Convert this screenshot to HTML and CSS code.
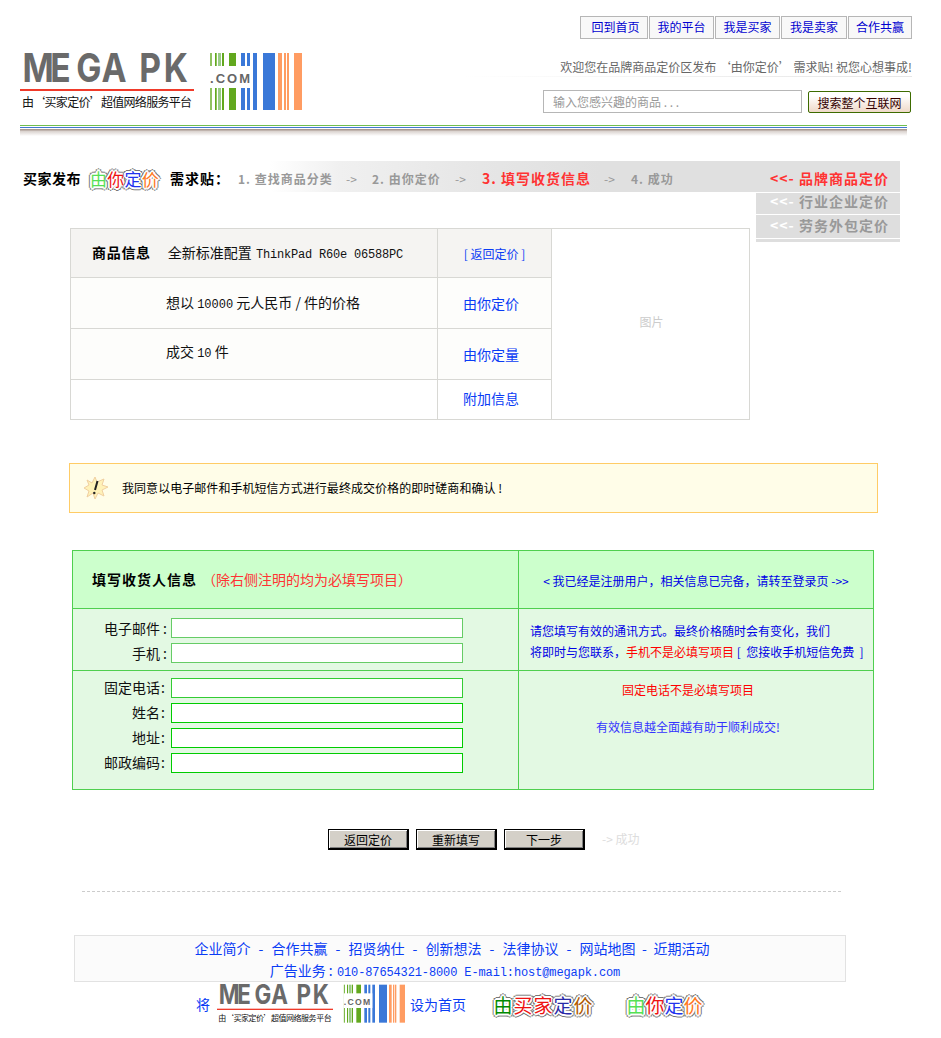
FILE: index.html
```html
<!DOCTYPE html>
<html lang="zh-CN">
<head>
<meta charset="utf-8">
<title>MEGA PK</title>
<link rel="stylesheet" href="styles.css">
</head>
<body>
<div class="page">
  <nav class="topnav">
    <a class="nav-first">回到首页</a><a class="nav-b">我的平台</a><a class="nav-b">我是买家</a><a class="nav-c">我是卖家</a><a class="nav-d">合作共赢</a>
  </nav>
  <header class="masthead">
    <svg class="logo" viewBox="0 0 282 60">
      <text class="logo-main" transform="scale(.84 1)" x="3 36 67 97 125 142 171" y="30">MEGA PK</text>
      <rect x="0" y="37" width="174" height="2" fill="#f03a2a"/>
      <text class="logo-sub" x="2" y="55" textLength="170">由‘买家定价’超值网络服务平台</text>
      <g class="bar-g"><rect x="190.3" y="1" width="1.4" height="57"/><rect x="195" y="1" width="1.7" height="57"/><rect x="198" y="1" width="3" height="57" fill="#9c8"/><rect x="202" y="1" width="2" height="57"/><rect x="209" y="1" width="7" height="57"/></g>
      <g class="bar-b"><rect x="221" y="1" width="4" height="57"/><rect x="227" y="1" width="3" height="57"/><rect x="233" y="1" width="4" height="57"/><rect x="243" y="1" width="12" height="57"/></g>
      <g class="bar-o"><rect x="258" y="1" width="4" height="57"/><rect x="264" y="1" width="2" height="57"/><rect x="267" y="1" width="2" height="57"/><rect x="274" y="1" width="8" height="57"/></g>
      <rect x="190" y="14" width="43" height="22" fill="#fff"/>
      <text class="logo-com" x="190" y="31" textLength="40">.COM</text>
    </svg>
    <div class="mast-right">
      <p class="welcome">欢迎您在品牌商品定价区发布 ‘由你定价’ 需求贴! 祝您心想事成!</p>
      <div class="searchrow">
        <input class="search-input" type="text" value="输入您感兴趣的商品 . . .">
        <button class="search-btn" type="button">搜索整个互联网</button>
      </div>
    </div>
  </header>
  <div class="rule"></div>

  <section class="stage">
    <div class="steps">
      <b class="lead">买家发布</b>
      <span class="sticker sticker-head"><i class="c-g">由</i><i class="c-r">你</i><i class="c-b">定</i><i class="c-o">价</i></span>
      <b class="lead lead-need">需求贴：</b>
      <b class="step s1">1. 查找商品分类</b><span class="arrow a1">-&gt;</span>
      <b class="step s2">2. 由你定价</b><span class="arrow a2">-&gt;</span>
      <b class="step-now">3. 填写收货信息</b><span class="arrow a3">-&gt;</span>
      <b class="step s4">4. 成功</b>
    </div>
    <div class="tab-active">&lt;&lt;- 品牌商品定价</div>
    <div class="stage-left">
      <table class="product">
        <tr class="row-head">
          <td class="p-main"><b class="p-title">商品信息</b><span class="p-name">全新标准配置 <span class="latin p-model">ThinkPad R60e 06588PC</span></span></td>
          <td class="p-link p-link-small"><a class="link-small">[ 返回定价 ]</a></td>
          <td class="p-pic" rowspan="4">图片</td>
        </tr>
        <tr class="row-a">
          <td class="p-text">想以 <span class="latin">10000</span> 元人民币 <span class="slash">/</span>件的价格</td>
          <td class="p-link"><a>由你定价</a></td>
        </tr>
        <tr class="row-b">
          <td class="p-text p-text-up">成交 <span class="latin">10</span> 件</td>
          <td class="p-link"><a>由你定量</a></td>
        </tr>
        <tr class="row-c">
          <td></td>
          <td class="p-link p-link-up"><a>附加信息</a></td>
        </tr>
      </table>
    </div>
    <div class="tabs">
      <div class="tab tab-1">&lt;&lt;- <span>行业企业定价</span></div>
      <div class="tab tab-2">&lt;&lt;- <span>劳务外包定价</span></div>
      <div class="tab-end"></div>
    </div>
  </section>

  <div class="notice">
    <svg class="notice-icon" viewBox="0 0 24 22">
      <polygon points="11,0 13,5 20,2 18,8 24,10 18,13 20,19 14,16 11,22 9,16 3,20 5,14 0,11 5,8 3,3 8,6" fill="#fff2b8" stroke="#f0cfa0" stroke-width="1"/>
      <path d="M13.5 4 L11 13" stroke="#222" stroke-width="2" fill="none"/>
      <circle cx="10.3" cy="16" r="1.2" fill="#222"/>
    </svg>
    <span class="notice-text">我同意以电子邮件和手机短信方式进行最终成交价格的即时磋商和确认 !</span>
  </div>

  <table class="form">
    <tr class="f-head">
      <td class="f-left"><b class="f-title">填写收货人信息</b><span class="f-req">（除右侧注明的均为必填写项目）</span></td>
      <td class="f-right center f-login"><a class="blue">&lt; 我已经是注册用户，相关信息已完备，请转至登录页 -&gt;&gt;</a></td>
    </tr>
    <tr class="f-row1">
      <td class="f-left">
        <div class="fields fields-1">
          <label class="field"><span>电子邮件<i class="colon">:</i></span><input class="inp inp-a" type="text"></label>
          <label class="field"><span>手机<i class="colon">:</i></span><input class="inp inp-a" type="text"></label>
        </div>
      </td>
      <td class="f-right f-hint">
        <span class="blue">请您填写有效的通讯方式。最终价格随时会有变化，我们</span><br>
        <span class="blue">将即时与您联系，</span><span class="red">手机不是必填写项目</span><span class="blue"> [&nbsp; 您接收手机短信免费 &nbsp;]</span>
      </td>
    </tr>
    <tr class="f-row2">
      <td class="f-left">
        <div class="fields fields-2">
          <label class="field"><span>固定电话<i class="colon">:</i></span><input class="inp inp-b" type="text"></label>
          <label class="field"><span>姓名<i class="colon">:</i></span><input class="inp inp-c" type="text"></label>
          <label class="field"><span>地址<i class="colon">:</i></span><input class="inp inp-c" type="text"></label>
          <label class="field"><span>邮政编码<i class="colon">:</i></span><input class="inp inp-c" type="text"></label>
        </div>
      </td>
      <td class="f-right f-note">
        <p class="red note-1">固定电话不是必填写项目</p>
        <p class="note-2">有效信息越全面越有助于顺利成交!</p>
      </td>
    </tr>
  </table>

  <div class="actions">
    <button class="act" type="button">返回定价</button>
    <button class="act" type="button">重新填写</button>
    <button class="act" type="button">下一步</button>
    <span class="act-next">-&gt; 成功</span>
  </div>

  <div class="dashed"></div>

  <footer class="foot">
    <p class="foot-links">企业简介<span class="sep">-</span>合作共赢<span class="sep">-</span>招贤纳仕<span class="sep">-</span>创新想法<span class="sep">-</span>法律协议<span class="sep">-</span>网站地图<span class="sep sep-last">-</span>近期活动</p>
    <p class="foot-ad">广告业务<i class="colon">:</i> <span class="latin foot-mail">010-87654321-8000 E-mail:host@megapk.com</span></p>
  </footer>
  <div class="foot-row">
    <a class="foot-a">将</a>
    <svg class="logo-small" viewBox="0 0 282 60">
      <text class="logo-main" transform="scale(.84 1)" x="3 36 67 97 125 142 171" y="30">MEGA PK</text>
      <rect x="0" y="37" width="174" height="2" fill="#f03a2a"/>
      <text class="logo-sub" x="2" y="55" textLength="170">由‘买家定价’超值网络服务平台</text>
      <g class="bar-g"><rect x="190.3" y="1" width="1.4" height="57"/><rect x="195" y="1" width="1.7" height="57"/><rect x="198" y="1" width="3" height="57" fill="#9c8"/><rect x="202" y="1" width="2" height="57"/><rect x="209" y="1" width="7" height="57"/></g>
      <g class="bar-b"><rect x="221" y="1" width="4" height="57"/><rect x="227" y="1" width="3" height="57"/><rect x="233" y="1" width="4" height="57"/><rect x="243" y="1" width="12" height="57"/></g>
      <g class="bar-o"><rect x="258" y="1" width="4" height="57"/><rect x="264" y="1" width="2" height="57"/><rect x="267" y="1" width="2" height="57"/><rect x="274" y="1" width="8" height="57"/></g>
      <rect x="190" y="14" width="43" height="22" fill="#fff"/>
      <text class="logo-com" x="190" y="31" textLength="40">.COM</text>
    </svg>
    <a class="foot-a foot-home">设为首页</a>
    <span class="sticker sticker-buyer"><i class="c-dg">由</i><i class="c-r">买</i><i class="c-r">家</i><i class="c-db">定</i><i class="c-br">价</i></span>
    <span class="sticker sticker-you"><i class="c-g">由</i><i class="c-r">你</i><i class="c-b">定</i><i class="c-o">价</i></span>
  </div>
</div>
</body>
</html>
```

FILE: styles.css
```css
* { box-sizing: border-box; }
html, body { margin: 0; padding: 0; background: #fff; }
body { font: 12px/1.2 "Noto Sans CJK SC", "Liberation Sans", sans-serif; color: #000; overflow-x: hidden; }
p { margin: 0; }
i { font-style: normal; }
.page { width: 941px; height: 1038px; overflow: hidden; }
.latin { font-family: "Liberation Mono", monospace; }
.blue { color: #0000e6; }
.red { color: #f00; }
.center { text-align: center; }
.colon { margin-left: 3px; margin-right: 1px; }

/* top nav */
.topnav { display: flex; justify-content: flex-end; gap: 1px; padding: 16px 29px 0 0; height: 39px; }
.topnav a { display: flex; align-items: center; justify-content: center; height: 23px; background: #f8f8f8; border: 1px solid #b6b6b6; color: #0000d0; }
.nav-first { width: 68px; padding-left: 3px; }
.nav-b { width: 65px; }
.nav-c { width: 66px; }
.nav-d { width: 64px; }

/* masthead */
.masthead { display: flex; justify-content: space-between; height: 86px; padding: 13px 29px 0 20px; }
.logo { width: 282px; height: 60px; display: block; overflow: visible; }
.logo-main { font: 700 40px Inter, "Liberation Sans", sans-serif; fill: #6a6a6a; }
.logo-sub { font: 12px "Noto Sans CJK SC", sans-serif; fill: #111; }
.logo-com { font: 700 13px "Liberation Sans", sans-serif; fill: #666; }
.bar-g { fill: #62a81e; }
.bar-b { fill: #3a78d8; }
.bar-o { fill: #ff9c62; }
.mast-right { width: 450px; display: flex; flex-direction: column; align-items: flex-end; padding-top: 7px; }
.welcome { width: 100%; height: 18px; line-height: 16px; text-align: right; color: #666; background: linear-gradient(90deg, #fff 0, #eee 60%, #e6e6e6 100%) left bottom / 100% 1px no-repeat; }
.searchrow { display: flex; align-items: flex-end; gap: 6px; margin-top: 13px; margin-right: 1px; }
.search-input { width: 259px; height: 23px; border: 1px solid #b6b6b6; padding: 0 9px; font: 12px "Noto Sans CJK SC", sans-serif; color: #999; background: #fff; outline: 0; }
.search-btn { width: 103px; height: 22px; padding: 0; border: 1px solid #3d6b00; border-radius: 2px; background: linear-gradient(180deg, #fff 20%, #efd9c8 100%); font: 12px "Noto Sans CJK SC", sans-serif; color: #300; }

.rule { margin-left: 20px; width: 887px; height: 11px; background: linear-gradient(180deg, #6fbf50 0 1px, #fff 1px 2px, #3f78d0 2px 3px, #fff 3px 4px, #a89890 4px 5px, #d8d0cc 6px, #fff 11px); }

/* steps + product */
.stage { display: grid; grid-template-columns: 756px 144px; margin-top: 25px; }
.steps { display: flex; align-items: center; height: 31px; padding: 4px 0 0 23px; background: linear-gradient(90deg, #fff 270px, #f0f0f0 340px, #e6e6e6 480px, #e0e0e0 600px); }
.tab-active { height: 31px; line-height: 34px; background: #e0e0e0; padding-left: 14px; color: #f33; font-weight: 700; font-size: 14px; letter-spacing: 1px; white-space: nowrap; }
.lead { font-size: 14px; letter-spacing: .5px; }
.lead-need { margin-left: 8px; width: 60px; letter-spacing: 1px; white-space: nowrap; }
.sticker { display: inline-flex; font-weight: 400; line-height: 1; text-shadow: 1px 0 #fff, -1px 0 #fff, 0 1px #fff, 0 -1px #fff, 1px 1px #fff, -1px -1px #fff, 1px -1px #fff, -1px 1px #fff, 2px 0 #fff, -2px 0 #fff, 0 2px #fff, 0 -2px #fff, 3px 0 #777, -3px 0 #777, 0 3px #777, 0 -3px #777, 2px 2px #777, -2px -2px #777, 2px -2px #777, -2px 2px #777; }
.sticker-head { font-size: 17px; width: 75px; margin-left: 6px; letter-spacing: .3px; justify-content: center; }
.c-g { color: #55e055; }
.c-r { color: #ee1111; }
.c-b { color: #2233ee; }
.c-o { color: #ff7722; }
.c-dg { color: #008a00; }
.c-db { color: #2a2aa8; }
.c-br { color: #b05a00; }
.step { color: #999; letter-spacing: 1px; margin-top: 2px; }
.s1 { margin-left: 8px; width: 94px; white-space: nowrap; }
.arrow { color: #999; width: 14px; margin-top: 2px; }
.a1 { margin-left: 14px; }
.s2 { margin-left: 12px; width: 69px; white-space: nowrap; }
.a2 { margin-left: 14px; }
.step-now { margin-left: 13px; width: 108px; color: #f33; font-size: 14px; white-space: nowrap; letter-spacing: 1px; }
.a3 { margin-left: 14px; }
.s4 { margin-left: 13px; white-space: nowrap; }
.stage-left { padding-left: 70px; padding-top: 36px; }
.tabs { display: flex; flex-direction: column; gap: 1px; padding-top: 1px; }
.tab { background: #dedede; padding-left: 14px; color: #fff; font-weight: 700; font-size: 14px; letter-spacing: 1px; white-space: nowrap; }
.tab-1 { height: 21px; line-height: 17px; }
.tab-2 { height: 23px; line-height: 20px; }
.tab span { color: #999; }
.tab-end { height: 3px; background: #dedede; }

.product { width: 680px; height: 192px; border-collapse: collapse; table-layout: fixed; }
.product td { border: 1px solid #d8d8d4; padding: 0; }
.product td:first-child { width: 367px; }
.product td.p-link { width: 114px; }
.row-head { height: 49px; background: #f5f4f2; }
.row-a { height: 51px; background: #fdfdfb; }
.row-b { height: 51px; background: #fdfdfb; }
.row-c { height: 40px; background: #fff; }
.product .p-main { padding-left: 21px; }
.p-title { font-size: 14px; margin-right: 17px; letter-spacing: .7px; }
.p-name { font-size: 14px; color: #111; }
.p-name .latin { font-size: 12px; }
.p-model { letter-spacing: -.2px; margin-left: 1px; }
.product .p-text { padding-left: 95px; font-size: 14px; color: #111; }
.p-text .latin { font-size: 12px; }
.product .p-text-up { padding-bottom: 4px; }
.slash { margin-right: 3px; }
.product .p-link { text-align: center; font-size: 14px; padding-right: 7px; }
.product .p-link-small { padding-right: 0; }
.product .p-link-up { padding-bottom: 2px; }
.p-link a { color: #0a3cf5; }
.p-link .link-small { font-size: 12px; }
.product .p-pic { background: #fff; color: #ccc; text-align: center; padding: 0 0 3px 2px; }

/* notice */
.notice { display: flex; align-items: center; margin: 43px 0 0 69px; width: 809px; height: 50px; background: #fffde8; border: 1px solid #ffcc66; padding-left: 14px; }
.notice-icon { width: 24px; height: 22px; margin-right: 14px; }
.notice-text { letter-spacing: .05px; }

/* form */
.form { margin: 37px 0 0 72px; width: 802px; height: 240px; border-collapse: collapse; table-layout: fixed; background: #e3f9e3; }
.form td { border: 1px solid #4fcf4f; padding: 0; }
.f-left { width: 446px; }
.f-head { height: 58px; background: #ccffcc; }
.form .f-head .f-left { padding-left: 19px; }
.f-title { font-size: 14px; letter-spacing: 1px; }
.f-req { font-size: 14px; color: #f33; margin-left: 5px; }
.form .f-login { padding-top: 3px; }
.f-row1 { height: 62px; }
.f-row2 { height: 119px; }
.form .f-hint { padding: 3px 0 0 11px; line-height: 21px; }
.f-note { vertical-align: top; text-align: center; }
.form .f-note { padding-right: 16px; }
.note-1 { margin-top: 12px; }
.note-2 { margin-top: 23px; color: #3333ff; }
.fields { display: flex; flex-direction: column; gap: 5px; }
.fields-1 { padding-top: 2px; }
.fields-2 { padding-bottom: 10px; }
.fields-2 .colon { margin-left: 1px; margin-right: 3px; }
.field { display: flex; align-items: center; gap: 3px; font-size: 14px; color: #111; }
.field span { width: 95px; text-align: right; }
.inp { width: 292px; height: 20px; padding: 0; background: #fff; outline: 0; border: 1px solid #00cc00; }
.inp-a { border-color: #66cc66; }
.inp-b { border-color: #33cc33; }
.inp-c { border-color: #00cc00; }

/* actions */
.actions { display: flex; align-items: center; gap: 7px; margin-top: 39px; padding-left: 328px; }
.act { width: 81px; height: 21px; padding: 0; background: #d4d0c8; border: 1px solid #000; border-right-width: 2px; border-bottom-width: 2px; box-shadow: inset 1px 1px #fff, inset -1px -1px #808080; font: 12px "Noto Sans CJK SC", sans-serif; color: #000; }
.act-next { margin-left: 10px; color: #ddd; }

.dashed { margin: 41px 0 0 82px; width: 759px; border-top: 1px dashed #ccc; }

/* footer */
.foot { margin: 43px 0 0 74px; width: 772px; height: 47px; background: #fbfbfb; border: 1px solid #e2e2e2; text-align: center; color: #0a3cf5; }
.foot-links { font-size: 14px; line-height: 24px; padding-right: 16px; }
.sep { display: inline-block; width: 21px; text-align: center; }
.sep-last { width: 18px; }
.foot-ad { font-size: 14px; line-height: 20px; padding-right: 30px; }
.foot-ad .latin { font-size: 12px; }
.foot-mail { letter-spacing: -.12px; }
.foot-row { display: flex; align-items: center; height: 44px; padding-left: 196px; color: #0a3cf5; font-size: 14px; }
.logo-small { width: 190px; height: 40px; margin-left: 6px; overflow: visible; }
.foot-home { margin-left: 4px; }
.sticker-buyer { font-size: 19px; width: 105px; margin-left: 25px; letter-spacing: 1px; justify-content: center; }
.sticker-you { font-size: 19px; width: 83px; margin-left: 27px; letter-spacing: 0; justify-content: center; }
```
